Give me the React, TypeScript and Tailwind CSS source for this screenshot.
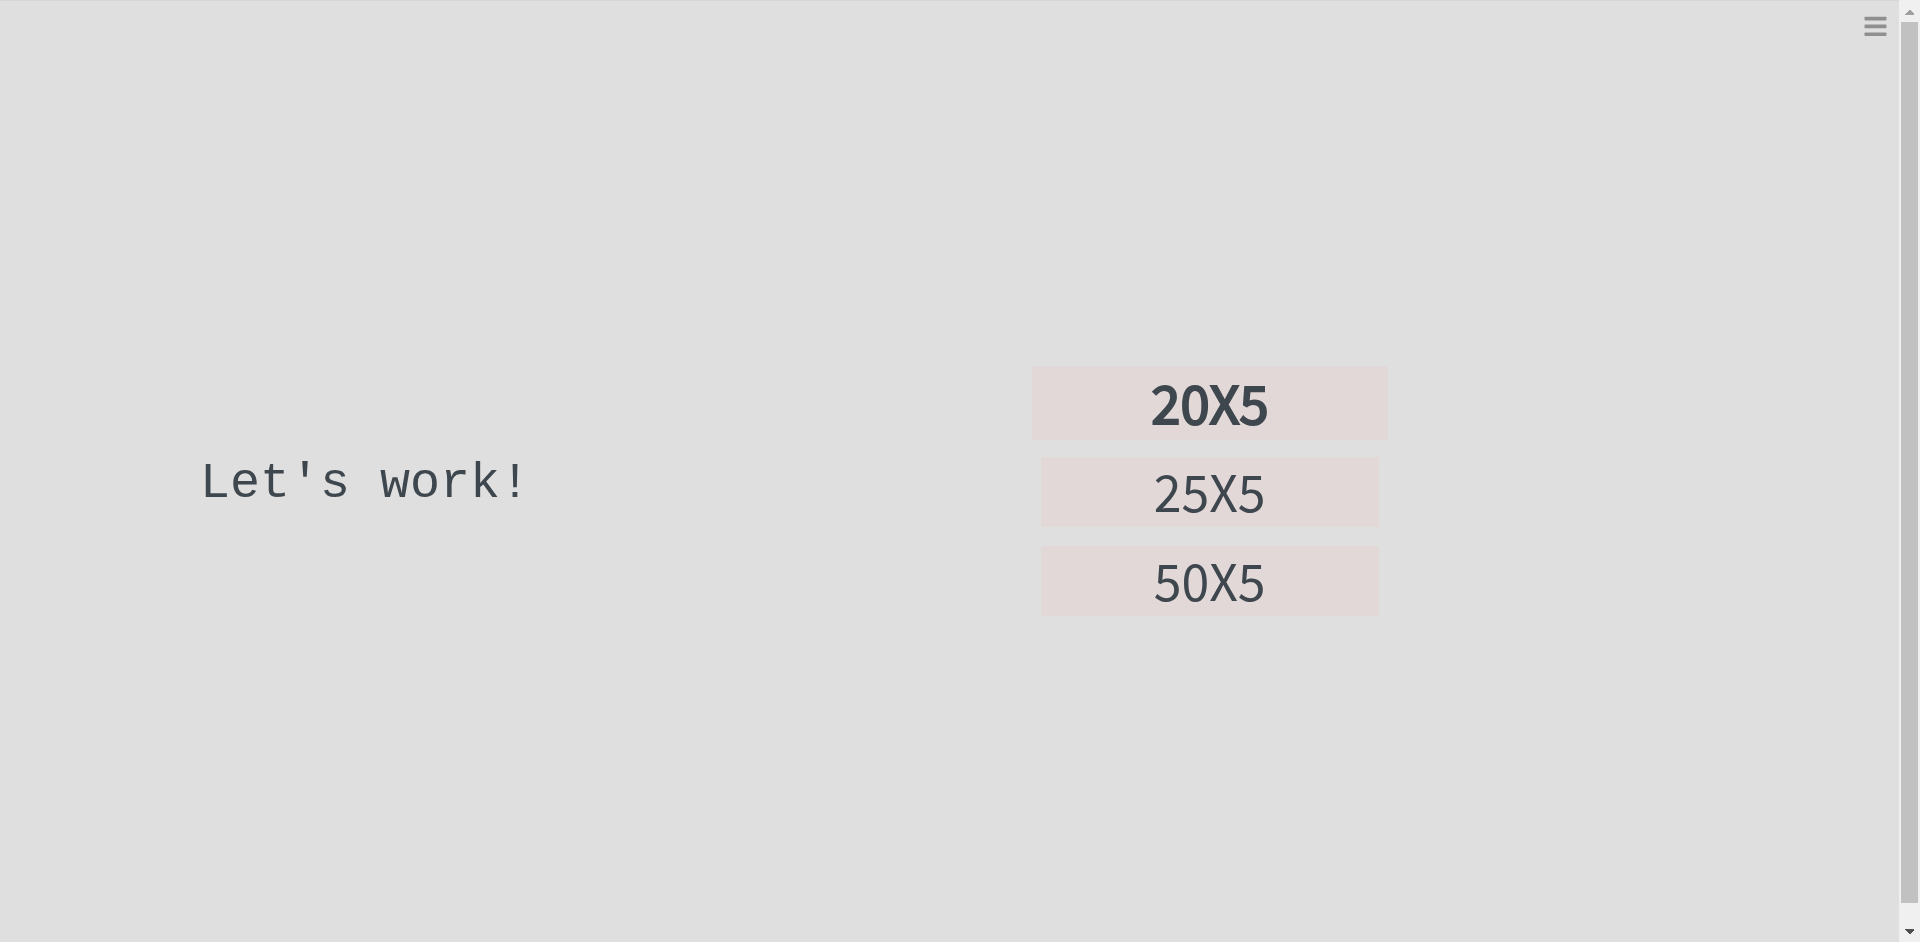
const options = ["20X5", "25X5", "50X5"];

function MenuButton() {
  return (
    <button type="button" aria-label="Open menu">
      <svg className="h-5 w-[23px]" viewBox="0 0 23 20" fill="#8f8f8f">
        <rect x="0.5" y="0.8" width="22" height="3.6" rx="0.8" />
        <rect x="0.5" y="8.6" width="22" height="3.6" rx="0.8" />
        <rect x="0.5" y="16.4" width="22" height="3.6" rx="0.8" />
      </svg>
    </button>
  );
}

function ScrollRail() {
  return (
    <div aria-hidden="true" className="flex w-[21px] shrink-0 flex-col items-center bg-[#f0f0f0]">
      <svg className="h-[22px] w-full" viewBox="0 0 21 22" shapeRendering="crispEdges">
        <path d="M6 15v-1l4-4h1l4 4v1z" fill="#a0a0a0" />
      </svg>
      <div className="w-[17px] grow bg-[#c1c1c1]" />
      <svg className="h-[39px] w-full" viewBox="0 0 21 39" shapeRendering="crispEdges">
        <path d="M6 26h9v1l-4 4h-1l-4-4z" fill="#505050" />
      </svg>
    </div>
  );
}

export default function App() {
  return (
    <div className="flex min-h-screen bg-[#dfdfdf] text-[#3f474e]">
      <div className="flex grow flex-col border-t border-[#d6d6dc]">
        <header className="flex h-10 items-start justify-end px-3 pt-[15px]">
          <MenuButton />
        </header>
        <main className="flex grow items-center">
          <h1 className="w-[54.8%] pb-4 pl-[200px] font-['Courier_New','Liberation_Mono',monospace] text-[50px] leading-[60px]">
            Let's work!
          </h1>
          <div className="flex w-[338px] flex-col gap-[19px] font-['Noto_Sans_CJK_JP',sans-serif] text-[50px] leading-[66px]">
            {options.map((option) => (
              <button
                key={option}
                type="button"
                className="h-[70px] w-full bg-[#e2d8d7] pb-1 first:scale-105 first:[-webkit-text-stroke:2px_#3f474e]"
              >
                {option}
              </button>
            ))}
          </div>
        </main>
      </div>
      <ScrollRail />
    </div>
  );
}
